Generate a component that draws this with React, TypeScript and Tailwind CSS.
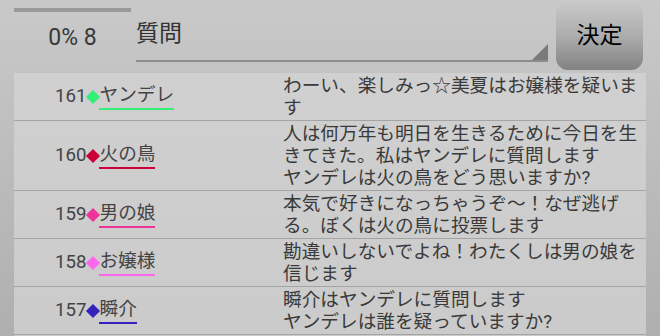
import React from "react";

type Post = {
  color: string;
  message: string[];
  name: string;
  no: number;
};

const posts: Post[] = [
  {
    color: "#33ee77",
    message: ["わーい、楽しみっ☆美夏はお嬢様を疑います"],
    name: "ヤンデレ",
    no: 161,
  },
  {
    color: "#cc0038",
    message: [
      "人は何万年も明日を生きるために今日を生きてきた。私はヤンデレに質問します",
      "ヤンデレは火の鳥をどう思いますか?",
    ],
    name: "火の鳥",
    no: 160,
  },
  {
    color: "#ee3399",
    message: ["本気で好きになっちゃうぞ～！なぜ逃げる。ぼくは火の鳥に投票します"],
    name: "男の娘",
    no: 159,
  },
  {
    color: "#ff66ee",
    message: ["勘違いしないでよね！わたくしは男の娘を信じます"],
    name: "お嬢様",
    no: 158,
  },
  {
    color: "#3322bb",
    message: ["瞬介はヤンデレに質問します", "ヤンデレは誰を疑っていますか?"],
    name: "瞬介",
    no: 157,
  },
];

const font = {
  fontFamily: "Roboto, 'Noto Sans CJK JP', sans-serif",
};

function PostRow({ post }: { post: Post }) {
  return (
    <div className="flex border-b border-[#a4a4a4] py-[1.5px]">
      <div className="flex w-[269px] shrink-0 items-center pl-[41px] text-[18.67px] text-[#444]">
        <span className="leading-none">{post.no}</span>
        <span className="flex h-[14px] w-[13px] items-center justify-center">
          <span
            className="block h-[10px] w-[10px] rotate-45"
            style={{ backgroundColor: post.color }}
          />
        </span>
        <span
          className="border-b-2 pb-[2px] leading-[22px]"
          style={{ borderColor: post.color }}
        >
          {post.name}
        </span>
      </div>
      <div className="w-[358px] text-[18.67px] leading-[22px] text-[#3a3a3a]">
        {post.message.map((line) => (
          <p key={line}>{line}</p>
        ))}
      </div>
    </div>
  );
}

export default function App() {
  return (
    <div
      className="h-[336px] w-[660px] overflow-hidden bg-gradient-to-b from-[#c9c9c9] to-[#afafaf]"
      style={font}
    >
      <header className="flex h-[73px] items-start">
        <div className="ml-[14px] flex w-[117px] flex-col items-center">
          <div className="mt-[8px] h-[4px] w-full bg-[#9a9a9a]" />
          <p className="mt-[12px] text-[23px] leading-[28px] text-[#383838]">0% 8</p>
        </div>
        <div className="relative ml-[5px] mt-[20px] h-[42px] w-[412px] border-b-2 border-[#8c8c8c]">
          <p className="text-[23px] leading-[28px] text-[#333]">質問</p>
          <span className="absolute bottom-0 right-0 h-0 w-0 border-b-[16px] border-l-[16px] border-b-[#7a7a7a] border-l-transparent" />
        </div>
        <button className="ml-[8px] mt-[2px] flex h-[68px] w-[87px] items-center justify-center rounded-[12px] bg-gradient-to-b from-[#c8c8c8] via-[#adadad] to-[#828282] text-[23px] text-black">
          決定
        </button>
      </header>
      <section className="ml-[14px] h-[263px] w-[632px] bg-gradient-to-b from-[#d0d0d0] to-[#cbcbcb]">
        {posts.map((post) => (
          <PostRow key={post.no} post={post} />
        ))}
      </section>
    </div>
  );
}
